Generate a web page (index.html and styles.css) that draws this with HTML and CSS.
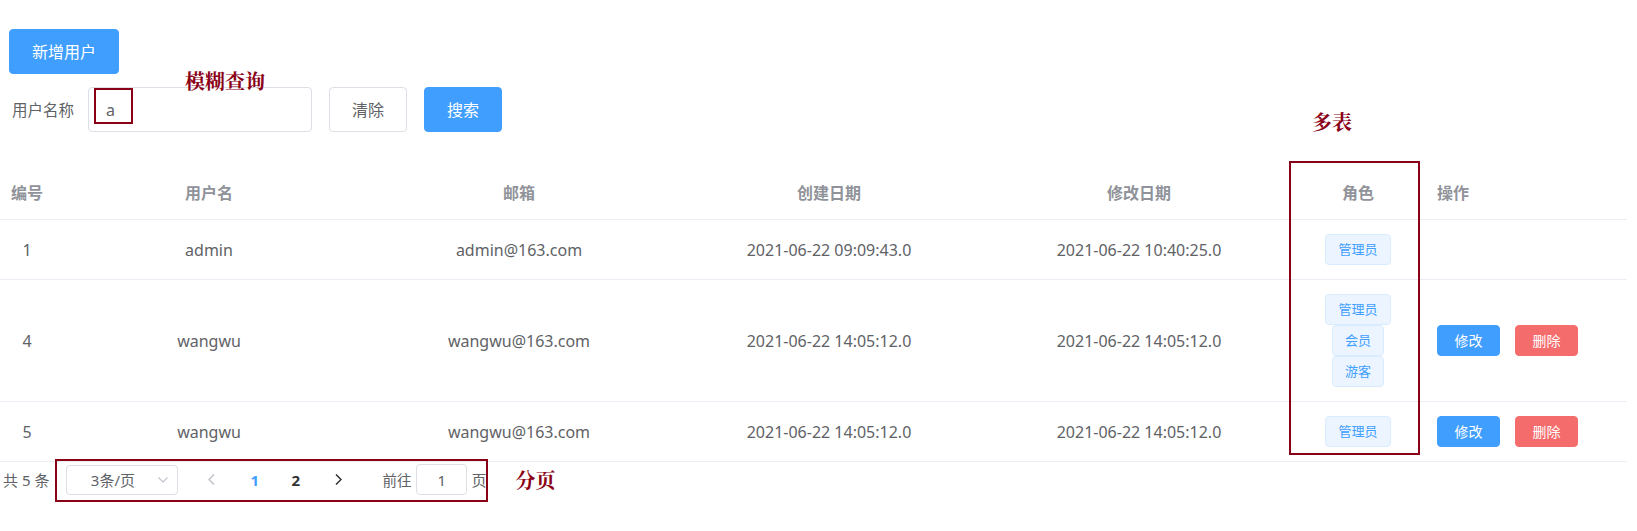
FILE: index.html
```html
<!DOCTYPE html>
<html lang="zh-CN">
<head>
<meta charset="utf-8">
<title>用户管理</title>
<link rel="stylesheet" href="styles.css">
</head>
<body>
<div class="page">
  <div class="toolbar">
    <button class="btn btn-primary btn-lg btn-add">新增用户</button>
  </div>
  <div class="search">
    <span class="search-label">用户名称</span>
    <div class="input"><span>a</span></div>
    <button class="btn btn-default btn-lg btn-search">清除</button>
    <button class="btn btn-primary btn-lg btn-search">搜索</button>
  </div>

  <table class="grid">
    <colgroup>
      <col class="c-id"><col class="c-wide"><col class="c-wide"><col class="c-wide"><col class="c-wide"><col class="c-role"><col class="c-op">
    </colgroup>
    <thead>
      <tr>
        <th>编号</th><th>用户名</th><th>邮箱</th><th>创建日期</th><th>修改日期</th><th>角色</th><th class="left">操作</th>
      </tr>
    </thead>
    <tbody>
      <tr>
        <td>1</td><td>admin</td><td>admin@163.com</td><td>2021-06-22 09:09:43.0</td><td>2021-06-22 10:40:25.0</td>
        <td><div class="tags"><span class="tag">管理员</span></div></td>
        <td class="left ops"></td>
      </tr>
      <tr>
        <td>4</td><td>wangwu</td><td>wangwu@163.com</td><td>2021-06-22 14:05:12.0</td><td>2021-06-22 14:05:12.0</td>
        <td><div class="tags"><span class="tag">管理员</span><span class="tag">会员</span><span class="tag">游客</span></div></td>
        <td class="left ops"><div class="op-row"><button class="btn btn-primary btn-sm">修改</button><button class="btn btn-danger btn-sm">删除</button></div></td>
      </tr>
      <tr>
        <td>5</td><td>wangwu</td><td>wangwu@163.com</td><td>2021-06-22 14:05:12.0</td><td>2021-06-22 14:05:12.0</td>
        <td><div class="tags"><span class="tag">管理员</span></div></td>
        <td class="left ops"><div class="op-row"><button class="btn btn-primary btn-sm">修改</button><button class="btn btn-danger btn-sm">删除</button></div></td>
      </tr>
    </tbody>
  </table>

  <div class="pager">
    <span class="total">共 5 条</span>
    <div class="select">
      <span class="select-text">3条/页</span>
      <svg class="select-arrow" width="10" height="6" viewBox="0 0 10 6"><path d="M0.5 0.5 L5 5 L9.5 0.5" fill="none" stroke="#c0c4cc" stroke-width="1.2"/></svg>
    </div>
    <span class="pg-btn pg-prev"><svg width="7" height="11" viewBox="0 0 7 11"><path d="M6 0.5 L1 5.5 L6 10.5" fill="none" stroke="#c0c4cc" stroke-width="1.5"/></svg></span>
    <span class="pg-btn pg-num active">1</span>
    <span class="pg-btn pg-num">2</span>
    <span class="pg-btn pg-next"><svg width="7" height="11" viewBox="0 0 7 11"><path d="M1 0.5 L6 5.5 L1 10.5" fill="none" stroke="#303133" stroke-width="1.5"/></svg></span>
    <span class="goto">前往</span>
    <div class="goto-input">1</div>
    <span class="goto-page">页</span>
    <span class="note note-page">分页</span>
  </div>

  <span class="note note-fuzzy">模糊查询</span>
  <span class="note note-multi">多表</span>
  <div class="mark mark-input"></div>
  <div class="mark mark-role"></div>
  <div class="mark mark-pager"></div>
</div>
</body>
</html>
```

FILE: styles.css
```css
html, body {
  margin: 0;
  padding: 0;
  background: #ffffff;
}

body {
  font-family: "Noto Sans", "Noto Sans CJK SC", sans-serif;
  color: #606266;
}

.page {
  position: relative;
  width: 1627px;
  padding-top: 29px;
  padding-bottom: 30px;
}

.toolbar {
  padding-left: 9px;
}

.btn {
  font-family: inherit;
  border: 1px solid transparent;
  border-radius: 4px;
  box-sizing: border-box;
  display: inline-flex;
  align-items: center;
  justify-content: center;
  padding: 0;
  margin: 0;
  line-height: 1;
  cursor: pointer;
}

.btn-lg {
  height: 45px;
  font-size: 16px;
}

.btn-add {
  width: 110px;
}

.btn-primary {
  background: #409eff;
  border-color: #409eff;
  color: #ffffff;
}

.btn-default {
  background: #ffffff;
  border-color: #dcdfe6;
  color: #606266;
}

.btn-danger {
  background: #f56c6c;
  border-color: #f56c6c;
  color: #ffffff;
}

.search {
  display: flex;
  align-items: center;
  margin-top: 13px;
  padding-left: 12px;
}

.search-label {
  font-size: 15.5px;
  color: #606266;
  margin-right: 14px;
}

.input {
  width: 224px;
  height: 45px;
  box-sizing: border-box;
  border: 1px solid #dcdfe6;
  border-radius: 4px;
  padding-left: 17px;
  display: flex;
  align-items: center;
  font-size: 16px;
  color: #606266;
}

.btn-search {
  width: 78px;
  margin-left: 17px;
}

/* table */
.grid {
  margin-top: 35px;
  width: 1627px;
  table-layout: fixed;
  border-collapse: collapse;
}

.c-id { width: 54px; }
.c-wide { width: 310px; }
.c-role { width: 128px; }
.c-op { width: 205px; }

.grid th,
.grid td {
  padding: 14px 0;
  line-height: 24px;
  font-size: 16px;
  text-align: center;
  vertical-align: middle;
  border-bottom: 1px solid #ebeef5;
  white-space: nowrap;
}

.grid th {
  color: #909399;
  font-weight: 700;
}

.grid td {
  color: #606266;
}

.grid .left {
  text-align: left;
  padding-left: 15px;
}

.tags {
  display: flex;
  flex-direction: column;
  align-items: center;
}

.tag {
  display: inline-flex;
  align-items: center;
  height: 31px;
  box-sizing: border-box;
  padding: 0 12px;
  font-size: 13px;
  line-height: 1;
  color: #409eff;
  background: #ecf5ff;
  border: 1px solid #d9ecff;
  border-radius: 4px;
}

.op-row {
  display: flex;
  gap: 15px;
}

.btn-sm {
  width: 63px;
  height: 31px;
  font-size: 14px;
}

/* pagination */
.pager {
  display: flex;
  align-items: center;
  height: 31px;
  margin-top: 2px;
  padding-left: 3px;
  font-size: 15px;
  color: #606266;
}

.select {
  width: 112px;
  height: 30px;
  box-sizing: border-box;
  margin-left: 17px;
  border: 1px solid #dcdfe6;
  border-radius: 4px;
  display: flex;
  align-items: center;
}

.select-text {
  flex: 1;
  text-align: center;
  font-size: 15px;
  color: #606266;
}

.select-arrow {
  margin-right: 9px;
}

.pg-btn {
  width: 41px;
  height: 31px;
  display: flex;
  align-items: center;
  justify-content: center;
  font-size: 15px;
  font-weight: 700;
  color: #303133;
}

.pg-prev { margin-left: 13px; }
.pg-num { margin-left: 2px; }
.pg-num + .pg-num { margin-left: 0; }
.pg-next { margin-left: 2px; }

.pg-num.active {
  color: #409eff;
}

.goto {
  margin-left: 23px;
  font-size: 14.5px;
}

.goto-input {
  margin-left: 5px;
  width: 51px;
  height: 31px;
  box-sizing: border-box;
  border: 1px solid #dcdfe6;
  border-radius: 4px;
  display: flex;
  align-items: center;
  justify-content: center;
  font-size: 15px;
}

.goto-page {
  margin-left: 4px;
  font-size: 15px;
}

/* annotations */
.note {
  font-family: "Noto Serif CJK SC", "Noto Sans CJK SC", serif;
  font-weight: 700;
  font-size: 20px;
  line-height: 24px;
  color: #8a0016;
}

.note-page {
  margin-left: 29px;
}

.note-fuzzy {
  position: absolute;
  left: 185px;
  top: 69px;
}

.note-multi {
  position: absolute;
  left: 1312px;
  top: 110px;
}

.mark {
  position: absolute;
  box-sizing: border-box;
  border: 2px solid #8a0016;
}

.mark-input {
  left: 94px;
  top: 88px;
  width: 39px;
  height: 36px;
}

.mark-role {
  left: 1289px;
  top: 161px;
  width: 131px;
  height: 294px;
}

.mark-pager {
  left: 55px;
  top: 459px;
  width: 433px;
  height: 43px;
}
```
